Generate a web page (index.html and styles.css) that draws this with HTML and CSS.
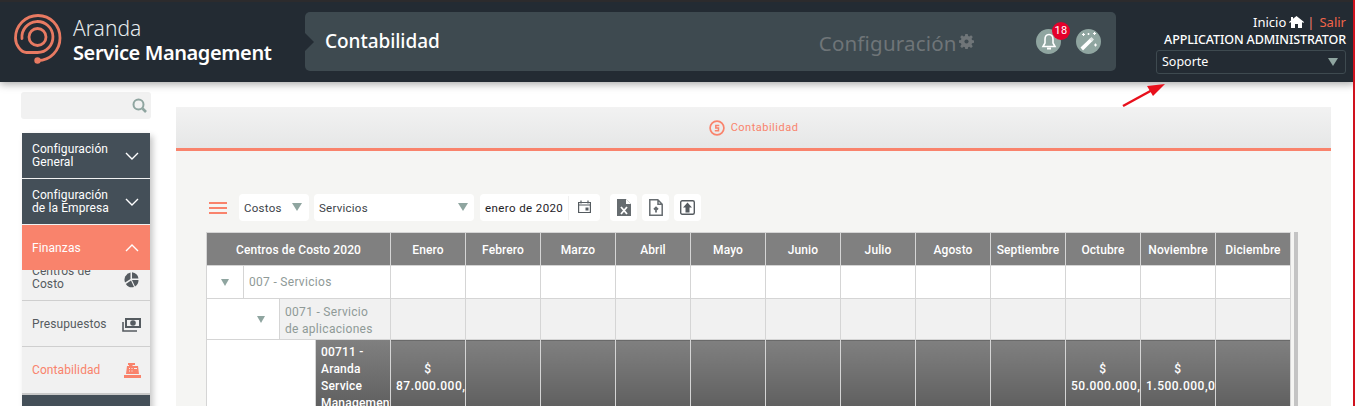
FILE: index.html
```html
<!DOCTYPE html>
<html lang="es">
<head>
<meta charset="utf-8">
<title>Contabilidad</title>
<link rel="stylesheet" href="styles.css">
</head>
<body>
<header class="topbar">
  <div class="brand">
    <svg class="logo" width="50" height="52" viewBox="0 0 50 52" fill="none" stroke="#e87a62" stroke-width="2.800" stroke-linecap="round">
      <circle cx="24.5" cy="24" r="8.5"/>
      <path d="M9 25.5A15.5 15.5 0 1 1 24.5 39.5H13.5C8 39.5 2.5 32 2.5 25 2.5 12.5 12.5 2.5 25 2.5S47 12.5 47 25 37 47.500 25 47.500"/>
      <circle cx="24.500" cy="47.500" r="3.200" fill="#e87a62" stroke="none"/>
    </svg>
    <div class="brand-text">
      <div class="brand-top">Aranda</div>
      <div class="brand-bottom">Service Management</div>
    </div>
  </div>
  <div class="title-panel">
    <span class="title">Contabilidad</span>
    <span class="config">Configuración<svg width="15" height="15" viewBox="0 0 16 16"><path fill="#6f7578" d="M6.700 0h2.600l.4 2.200 1.300.5 1.900-1.300 1.800 1.800-1.300 1.900.5 1.300 2.100.4v2.600l-2.100.4-.5 1.300 1.300 1.900-1.800 1.800-1.900-1.300-1.300.5-.4 2.100H6.700l-.4-2.100-1.300-.5-1.900 1.300-1.800-1.800 1.300-1.900-.5-1.300L0 9.300V6.700l2.100-.4.5-1.300-1.300-1.900 1.800-1.800L5 2.700l1.300-.5z"/><circle cx="8" cy="8" r="2.200" fill="#3e4a50"/></svg></span>
    <span class="round-btn bell">
      <svg width="16" height="18" viewBox="0 0 16 18" fill="none" stroke="#fff" stroke-width="1.600"><path d="M8 1.500C5 1.500 4 4 4 6.500V10L2 13.500H14L12 10V6.500C12 4 11 1.500 8 1.500Z"/><path d="M6 15.500H10" stroke-width="2"/></svg>
      <span class="badge">18</span>
    </span>
    <span class="round-btn">
      <svg width="19" height="19" viewBox="0 0 19 19"><path d="M1.500 15.500L11.500 6l2.500 2.500-10 10Z" fill="#fff"/><path d="M10.500 7l2-2 2.500 2.500-2 2Z" fill="#dfe6e4"/><path d="M3 2.500h3M4.500 1v3M14 1.500h3M15.500 0v3M15 13h3M16.500 11.500v3M8.500 2h2M9.500 1v2" stroke="#fff" stroke-width="1.100"/></svg>
    </span>
  </div>
  <div class="user-box">
    <div class="links">Inicio <svg width="15" height="12" viewBox="0 0 15 12"><path fill="#fff" d="M7.500 0L15 6l-.8.900L13 6v6H9V8H6v4H2V6L.8 6.900 0 6l2-1.600V1h2v1.800z"/></svg><span class="sep">|</span><span class="exit">Salir</span></div>
    <div class="user-name">APPLICATION ADMINISTRATOR</div>
    <div class="role">Soporte<span class="tri role-tri"></span></div>
  </div>
</header>

<div class="layout">
  <aside class="sidebar">
    <div class="search">
      <svg width="15" height="15" viewBox="0 0 15 15" fill="none" stroke="#8fa5a0" stroke-width="2"><circle cx="6.500" cy="6.500" r="5"/><path d="M10.500 10.500L14 14" stroke-width="2.600"/></svg>
    </div>
    <nav class="menu">
      <div class="menu-head"><span>Configuración<br>General</span><svg class="chev" width="14" height="8" viewBox="0 0 14 8" fill="none" stroke="#fff" stroke-width="1.400"><path d="M1 1l6 6 6-6"/></svg></div>
      <div class="menu-head"><span>Configuración<br>de la Empresa</span><svg class="chev" width="14" height="8" viewBox="0 0 14 8" fill="none" stroke="#fff" stroke-width="1.400"><path d="M1 1l6 6 6-6"/></svg></div>
      <div class="menu-head open"><span>Finanzas</span><svg class="chev" width="14" height="8" viewBox="0 0 14 8" fill="none" stroke="#fff" stroke-width="1.400"><path d="M1 7l6-6 6 6"/></svg></div>
      <div class="sub clipped"><span>Centros de<br>Costo</span>
        <svg width="16" height="16" viewBox="0 0 16 16" fill="#555b60"><path d="M7.500 0.500V7L2 10.500A7.500 7.500 0 0 1 7.500 .5Z"/><path d="M9 .300A7.500 7.500 0 0 1 15.500 6.500H9Z"/><path d="M9 8h6.500A7.500 7.500 0 0 1 12 14.500Z"/><path d="M8 8.500l3 6.500A7.500 7.500 0 0 1 2.800 12Z"/></svg>
      </div>
      <div class="sub"><span>Presupuestos</span>
        <svg width="19" height="14" viewBox="0 0 19 14"><path fill="#555b60" d="M3 0h16v10H3zM5 2v6h12V2z"/><circle cx="11" cy="5" r="2.800" fill="#555b60"/><path fill="none" stroke="#555b60" stroke-width="1.600" d="M1 4v9h14"/></svg>
      </div>
      <div class="sub active"><span>Contabilidad</span>
        <svg width="17" height="15" viewBox="0 0 17 15" fill="#f9836c"><path d="M4 0h7v2H8.500v1H14l1 8H2l1-8h2V2H4z"/><path d="M0 12h17v3H0z"/><path d="M5 5h1v1H5zM7.500 5h1v1h-1zM5 7.500h1v1H5zM7.500 7.500h1v1h-1zM10 5h3v1h-3z" fill="#f1f1f1"/></svg>
      </div>
      <div class="menu-head tail"></div>
    </nav>
  </aside>

  <main class="panel">
    <div class="tab">
      <svg width="16" height="16" viewBox="0 0 16 16" fill="none" stroke="#f9836c"><circle cx="8" cy="8" r="6.900" stroke-width="1.700"/><path d="M10.300 5.500H6.800V8H9.500V10.700H5.800" stroke-width="1.500"/></svg>
      <span>Contabilidad</span>
    </div>
    <div class="content">
      <div class="toolbar">
        <div class="burger"><i></i><i></i><i></i></div>
        <div class="field f-costos">Costos<span class="tri"></span></div>
        <div class="field f-serv">Servicios<span class="tri"></span></div>
        <div class="field f-date"><span class="date-text">enero de 2020</span>
          <span class="cal"><svg width="13" height="13" viewBox="0 0 13 13" fill="none" stroke="#555b60" stroke-width="1.200"><path d="M.6 2.500h11.800v10H.6zM.6 5h11.800M3 .5v3M10 .5v3"/><path d="M7.500 7.500h3v3h-3z" fill="#555b60" stroke="none"/></svg></span>
        </div>
        <div class="tool">
          <svg width="14" height="17" viewBox="0 0 14 17"><path fill="#666c70" d="M0 0h9l5 5v12H0z"/><path d="M4 8l6 7M10 8l-6 7" stroke="#fff" stroke-width="1.800"/><path d="M9 0v5h5" fill="#fff"/></svg>
        </div>
        <div class="tool">
          <svg width="14" height="17" viewBox="0 0 14 17" fill="none" stroke="#666c70" stroke-width="1.500"><path d="M.8.800h8l4.400 4.400v11H.8zM9 .8v4.400h4.200"/><path d="M7 13.500V9M5 10.500l2-2 2 2" stroke-width="1.800"/></svg>
        </div>
        <div class="tool">
          <svg width="15" height="15" viewBox="0 0 15 15"><rect x=".7" y=".7" width="13.600" height="13.600" rx="1.500" fill="none" stroke="#555b60" stroke-width="1.400"/><path d="M7.500 2.500l4.500 5H9.500v5h-4v-5H3z" fill="#555b60"/></svg>
        </div>
      </div>

      <div class="grid-wrap">
        <table class="grid">
          <thead>
            <tr>
              <th class="col-name">Centros de Costo 2020</th>
              <th>Enero</th><th>Febrero</th><th>Marzo</th><th>Abril</th><th>Mayo</th><th>Junio</th><th>Julio</th><th>Agosto</th><th>Septiembre</th><th>Octubre</th><th>Noviembre</th><th>Diciembre</th>
            </tr>
          </thead>
          <tbody>
            <tr class="lvl1">
              <td class="tree"><div class="tree-row"><span class="arrow"><span class="tri small"></span></span><span class="tree-cell">007 - Servicios</span></div></td>
              <td></td><td></td><td></td><td></td><td></td><td></td><td></td><td></td><td></td><td></td><td></td><td></td>
            </tr>
            <tr class="lvl2">
              <td class="tree"><div class="tree-row"><span class="indent"></span><span class="arrow"><span class="tri small"></span></span><span class="tree-cell">0071 - Servicio de aplicaciones</span></div></td>
              <td></td><td></td><td></td><td></td><td></td><td></td><td></td><td></td><td></td><td></td><td></td><td></td>
            </tr>
            <tr class="lvl3">
              <td class="tree"><div class="tree-row"><span class="indent3"></span><span class="tree-cell">00711 - Aranda Service Management</span></div></td>
              <td><div class="amount"><div class="amount-in">$<br>87.000.000,00</div></div></td><td></td><td></td><td></td><td></td><td></td><td></td><td></td><td></td>
              <td><div class="amount"><div class="amount-in">$<br>50.000.000,00</div></div></td><td><div class="amount"><div class="amount-in">$<br>1.500.000,00</div></div></td><td></td>
            </tr>
          </tbody>
        </table>
        <div class="vscroll"></div>
      </div>
    </div>
  </main>
</div>

<svg class="annot" width="46" height="26" viewBox="0 0 46 26"><path d="M2 24L34 6.500" stroke="#e8101c" stroke-width="2.500"/><path d="M44 2L26 4l6 10z" fill="#e8101c"/></svg>
<div class="edge"></div>
</body>
</html>
```
FILE: styles.css
```css
* { box-sizing: border-box; }
html, body { margin: 0; height: 406px; overflow: hidden; background: #fff; }
body { font-family: Roboto, "Liberation Sans", sans-serif; position: relative; }

.topbar {
  height: 82px;
  background: #232b33;
  border-top: 2px solid #2c2b2d;
  box-shadow: 0 2px 8px rgba(0,0,0,.35);
  display: flex;
  align-items: flex-start;
  color: #fff;
  font-family: "Noto Sans", sans-serif;
  position: relative;
  z-index: 2;
}
.brand { width: 305px; display: flex; padding: 11px 0 0 13px; flex: none; }
.logo { flex: none; }
.brand-text { margin-left: 10px; margin-top: 3px; }
.brand-top { font-size: 21px; font-weight: 300; line-height: 24px; color: #e6ecef; }
.brand-bottom { font-size: 20px; font-weight: 600; line-height: 24px; margin-top: 1px; letter-spacing: -.4px; white-space: nowrap; }

.title-panel {
  width: 811px; height: 59px; margin-top: 10px;
  background: #3e4a50; border-radius: 5px;
  display: flex; align-items: center; padding-left: 20px;
  position: relative; flex: none;
}
.title-panel::before {
  content: ""; position: absolute; left: 0; top: 21px;
  border-left: 9px solid #232b33;
  border-top: 9px solid transparent; border-bottom: 9px solid transparent;
}
.title { font-size: 19px; font-weight: 500; letter-spacing: -.05px; padding-bottom: 2px; }
.config { margin-left: 379px; font-size: 20.500px; color: #6f7578; display: flex; align-items: flex-start; letter-spacing: .2px; width: 218px; white-space: nowrap; padding-top: 3px; }
.config svg { margin: 5px 0 0 2px; }
.round-btn {
  width: 25px; height: 25px; border-radius: 50%; background: #8fa5a0;
  display: flex; align-items: center; justify-content: center; flex: none;
  position: relative; margin-right: 15px;
}
.badge {
  position: absolute; left: 16px; top: -7px; width: 18px; height: 18px; border-radius: 50%;
  background: #e4002b; color: #fff; font-size: 11px; line-height: 18px; text-align: center;
  font-family: Roboto, sans-serif; letter-spacing: .4px;
}
.user-box { width: 190px; margin-left: 40px; text-align: right; font-size: 13px; padding-top: 11px; flex: none; }
.links { line-height: 18px; display: flex; justify-content: flex-end; align-items: center; gap: 3px; }
.sep { color: #f9836c; margin: 0 2px 0 0; }
.exit { color: #f0654a; }
.user-name { font-size: 12.500px; font-weight: 500; line-height: 18px; letter-spacing: -.12px; white-space: nowrap; }
.role {
  height: 24px; margin-top: 1px; border: 1px solid #3e4a50; border-radius: 3px; text-align: left;
  padding-left: 5px; line-height: 21px; font-size: 12.500px; position: relative;
}
.tri { width: 0; height: 0; border-left: 5.500px solid transparent; border-right: 5.500px solid transparent; border-top: 8px solid #8fa5a0; display: inline-block; }
.role-tri { position: absolute; right: 7px; top: 7px; }

.layout { display: flex; height: 324px; align-items: flex-start; }
.sidebar { width: 130px; margin-left: 21px; flex: none; padding-top: 10px; }
.search { height: 27px; background: #f1f1f1; border-radius: 3px; display: flex; align-items: center; justify-content: flex-end; padding-right: 4px; }
.menu { margin: 14px 1px 0; background: #f1f1f1; box-shadow: 3px 3px 6px rgba(0,0,0,.22); font-size: 12px; letter-spacing: .1px; }
.menu-head {
  height: 45px; background: #444f58; color: #fff; display: flex; align-items: center; justify-content: space-between;
  padding: 0 11px 0 10px; line-height: 13px; margin-bottom: 1px;
}
.menu-head.open { background: #f9836c; margin-bottom: 0; padding-top: 2px; }
.menu-head.open .chev { margin-top: -1px; }
.menu-head.tail { margin: 0; height: 20px; }
.sub {
  height: 46px; background: #f1f1f1; color: #555b60; display: flex; align-items: center; justify-content: space-between;
  padding: 2px 9px 0 10px; border-bottom: 1px solid #cfcfcf; line-height: 13px;
}
.sub.clipped { height: 31px; align-items: flex-end; padding: 0 10px 9px; overflow: hidden; }
.sub.clipped svg { margin-bottom: 3px; margin-right: 1px; }
.sub.active { color: #f9836c; height: 48px; padding-top: 0; border-bottom: 2px solid #c9c9c9; }

.panel { width: 1155px; margin-left: 25px; margin-top: 25px; flex: none; }
.tab {
  height: 44px; border-bottom: 3px solid #f9836c;
  background: linear-gradient(#f2f2f2, #e6e7e7);
  display: flex; align-items: center; justify-content: center; gap: 6px;
  font-size: 11px; color: #f9836c; letter-spacing: .5px;
}
.content { background: #f5f5f3; height: 300px; padding: 42px 0 0 30px; }
.toolbar { display: flex; align-items: center; height: 29px; font-size: 11.500px; letter-spacing: .25px; }
.burger { width: 18px; margin-left: 3px; margin-right: 12px; display: flex; flex-direction: column; gap: 3px; }
.burger i { display: block; height: 2px; background: #f9836c; }
.field { height: 27px; background: #fff; border-radius: 4px; display: flex; align-items: center; justify-content: space-between; padding: 0 5px; color: #3c4248; }
.field .tri { margin-bottom: 1px; }
.f-costos { width: 70px; padding-right: 7px; margin-right: 5px; }
.f-serv { width: 160px; padding-right: 6px; margin-right: 6px; }
.f-date { width: 120px; margin-right: 10px; color: #1f2328; padding-right: 0; font-size: 11.500px; letter-spacing: .4px; }
.cal { width: 32px; height: 24px; border-left: 1px solid #f0f0f0; display: flex; align-items: center; justify-content: center; flex: none; padding-bottom: 2px; }
.tool { width: 27px; height: 27px; background: #fff; border-radius: 4px; margin-right: 5px; display: flex; align-items: center; justify-content: center; }

.grid-wrap { margin-top: 10px; display: flex; width: 1092px; }
.grid { width: 1084px; table-layout: fixed; border-collapse: collapse; font-size: 12px; flex: none; }
.grid th, .grid td { border: 1px solid #d5d5d5; padding: 0; }
.grid th { width: 75px; height: 33px; padding-top: 2px; background: #808080; color: #fff; font-weight: 500; letter-spacing: .1px; }
.grid th.col-name { width: 184px; }
.grid td { background: #fff; }
.tree { vertical-align: top; }
.tree-row { display: flex; height: 100%; min-height: 32px; }
.arrow { width: 36px; flex: none; display: flex; align-items: center; justify-content: center; }
.tri.small { border-left-width: 4.500px; border-right-width: 4.500px; border-top-width: 7px; }
.indent { width: 36px; flex: none; }
.indent3 { width: 108px; flex: none; }
.tree-cell { flex: 1; min-width: 0; padding: 0 10px 0 5px; border-left: 1px solid #d5d5d5; display: flex; align-items: center; color: #8f9a97; line-height: 17px; letter-spacing: .3px; }
.lvl1 td { height: 33px; }
.lvl1 .tree-row { height: 32px; }
.lvl2 td { height: 41px; background: #f1f1f1; }
.grid .lvl2 td.tree { background: #fff; }
.lvl2 .tree-row { height: 40px; }
.lvl2 .tree-cell { background: #f1f1f1; padding-top: 3px; }
.lvl3 td { height: 90px; background: linear-gradient(#808080, #545454); color: #fff; vertical-align: top; }
.grid .lvl3 td.tree { background: #fff; }
.lvl3 .tree-row { height: 90px; }
.lvl3 .tree-cell { background: linear-gradient(#808080, #545454); color: #fff; font-weight: 500; align-items: flex-start; padding: 4px 0 0 5px; overflow: hidden; letter-spacing: .2px; }
.amount { overflow: hidden; }
.amount-in { padding: 21px 5px 0; line-height: 17px; text-align: center; font-weight: 500; white-space: nowrap; letter-spacing: .5px; }
.vscroll { width: 4px; height: 200px; margin-left: 3px; background: #c4c4c4; flex: none; }

.annot { position: absolute; left: 1121px; top: 82px; z-index: 3; }
.edge { position: absolute; right: 0; top: 0; width: 2px; height: 406px; background: #d0121e; z-index: 4; }
```
